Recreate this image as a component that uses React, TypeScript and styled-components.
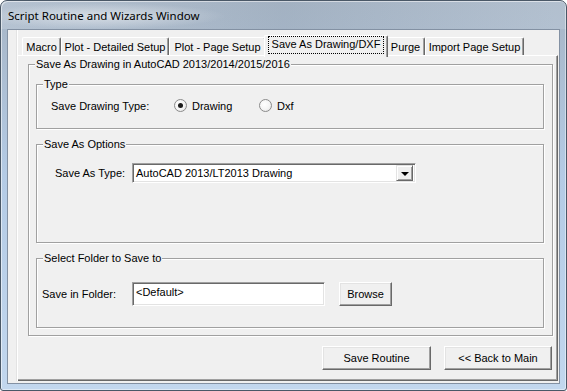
import styled, { createGlobalStyle } from "styled-components";

const GlobalStyle = createGlobalStyle`
  html, body {
    margin: 0;
    padding: 0;
    background: #ffffff;
  }
  body {
    width: 567px;
    height: 391px;
    overflow: hidden;
    font-family: "Liberation Sans", Arial, sans-serif;
  }
  * {
    box-sizing: border-box;
  }
`;

// ─── Window frame ────────────────────────────────────────────────────────────

const Window = styled.div`
  width: 567px;
  height: 391px;
  display: flex;
  flex-direction: column;
  border: 1px solid #4a5867;
  border-radius: 7px 7px 3px 3px;
  background: linear-gradient(180deg, #a8b7c8 0px, #a9b9cb 30px, #b4cbe5 45%, #c2d7ee 100%);
  box-shadow: inset 1px 1px 0 rgba(255, 255, 255, 0.55), inset -1px -1px 0 rgba(255, 255, 255, 0.45);
  overflow: hidden;
`;

const TitleBar = styled.div`
  height: 28px;
  flex: none;
  display: flex;
  align-items: center;
  padding-left: 7px;
  font-family: "Noto Sans", "Liberation Sans", sans-serif;
  font-size: 11.5px;
  color: #000;
  background:
    radial-gradient(ellipse 125px 13px at 100px 15px, rgba(255, 255, 255, 0.5), rgba(255, 255, 255, 0) 100%),
    linear-gradient(90deg, rgba(255, 255, 255, 0.15), rgba(0, 0, 0, 0.03) 50%, rgba(255, 255, 255, 0.12));
`;

const Client = styled.div`
  flex: 1;
  margin: 0 6px 6px 6px;
  border: 1px solid #8391a3;
  background: #f0f0f0;
  padding: 0 1px 2px 9px;
  display: flex;
  font-size: 11px;
  color: #000;
`;

// ─── Tab control (classic style) ─────────────────────────────────────────────

const TabControl = styled.div`
  flex: 1;
  display: flex;
  flex-direction: column;
  border-left: 1px solid #ffffff;
  box-shadow: -1px 0 0 #e3e3e3;
`;

const TabStrip = styled.div`
  height: 25px;
  display: flex;
  align-items: flex-end;
  padding-left: 4px;
  position: relative;
  z-index: 1;
`;

const Tab = styled.div<{ $w: number; $active?: boolean }>`
  width: ${(p) => (p.$active ? p.$w + 4 : p.$w)}px;
  height: ${(p) => (p.$active ? 22 : 18)}px;
  margin: ${(p) => (p.$active ? "0 -2px -2px -2px" : "0")};
  display: flex;
  align-items: center;
  justify-content: center;
  padding-bottom: ${(p) => (p.$active ? 3 : 0)}px;
  background: #f0f0f0;
  border-top: 1px solid #ffffff;
  border-left: 1px solid #ffffff;
  border-right: 1px solid #696969;
  border-radius: 2px 2px 0 0;
  box-shadow: inset -1px 0 0 #a0a0a0;
  white-space: nowrap;
  position: relative;
  z-index: ${(p) => (p.$active ? 2 : 1)};
`;

const FocusLabel = styled.span`
  outline: 1px dotted #000;
  outline-offset: 0;
  padding: 1px 3px 2px;
  line-height: 13px;
`;

const TabPage = styled.div`
  flex: 1;
  display: flex;
  flex-direction: column;
  padding: 8px 4px 0 10px;
  border-top: 1px solid #ffffff;
  border-right: 1px solid #696969;
  border-bottom: 1px solid #696969;
  box-shadow: inset -1px -1px 0 #a0a0a0;
`;

// ─── Group boxes ─────────────────────────────────────────────────────────────

const GroupBox = styled.div<{ $h: number }>`
  position: relative;
  height: ${(p) => p.$h}px;
  flex: none;
  border: 1px solid #a0a0a0;
  box-shadow: 1px 1px 0 #ffffff, inset 1px 1px 0 #ffffff;
`;

const GroupTitle = styled.span`
  position: absolute;
  top: -8px;
  left: 6px;
  padding: 0 1px;
  background: #f0f0f0;
  line-height: 14px;
  font-size: 11px;
`;

const OuterBody = styled.div`
  display: flex;
  flex-direction: column;
  gap: 15px;
  padding: 19px 8px 0 7px;
`;

const Row = styled.div<{ $pt: number; $pl: number }>`
  display: flex;
  align-items: center;
  padding: ${(p) => p.$pt}px 0 0 ${(p) => p.$pl}px;
`;

const FieldLabel = styled.span<{ $w: number }>`
  width: ${(p) => p.$w}px;
  flex: none;
  white-space: nowrap;
`;

// ─── Radio ───────────────────────────────────────────────────────────────────

const RadioItem = styled.label`
  width: 85px;
  display: flex;
  align-items: center;
  gap: 5px;
`;

const RadioDot = styled.span<{ $on?: boolean }>`
  width: 13px;
  height: 13px;
  border-radius: 50%;
  border: 1px solid #8b8b8b;
  background: radial-gradient(circle at 40% 40%, #ffffff 0%, #f4f4f4 55%, #dcdcdc 100%);
  display: flex;
  align-items: center;
  justify-content: center;

  &::after {
    content: "";
    width: 5px;
    height: 5px;
    border-radius: 50%;
    background: ${(p) => (p.$on ? "#1c1c1c" : "transparent")};
  }
`;

// ─── Inputs ──────────────────────────────────────────────────────────────────

const Sunken = styled.div<{ $w: number; $h: number }>`
  width: ${(p) => p.$w}px;
  height: ${(p) => p.$h}px;
  background: #ffffff;
  border-top: 1px solid #a0a0a0;
  border-left: 1px solid #a0a0a0;
  border-right: 1px solid #ffffff;
  border-bottom: 1px solid #ffffff;
  box-shadow: inset 1px 1px 0 #696969, inset -1px -1px 0 #e3e3e3;
`;

const ComboBox = styled(Sunken)`
  display: flex;
  align-items: center;
  padding: 0 2px 0 3px;
`;

const ComboText = styled.span`
  flex: 1;
  white-space: nowrap;
`;

const DropButton = styled.span`
  width: 17px;
  height: 16px;
  display: flex;
  align-items: center;
  justify-content: center;
  background: #f0f0f0;
  border-top: 1px solid #e3e3e3;
  border-left: 1px solid #e3e3e3;
  border-right: 1px solid #696969;
  border-bottom: 1px solid #696969;
  box-shadow: inset 1px 1px 0 #ffffff, inset -1px -1px 0 #a0a0a0;

  &::after {
    content: "";
    border-left: 4px solid transparent;
    border-right: 4px solid transparent;
    border-top: 4px solid #000;
    margin-top: 1px;
  }
`;

const TextBox = styled(Sunken)`
  padding: 3px 3px;
  line-height: 13px;
`;

const Button = styled.button<{ $w: number; $ml?: number }>`
  width: ${(p) => p.$w}px;
  height: 24px;
  margin-left: ${(p) => p.$ml ?? 0}px;
  padding: 0;
  font-family: "Liberation Sans", Arial, sans-serif;
  font-size: 11px;
  color: #000;
  background: #f0f0f0;
  border-top: 1px solid #ffffff;
  border-left: 1px solid #ffffff;
  border-right: 1px solid #696969;
  border-bottom: 1px solid #696969;
  box-shadow: inset -1px -1px 0 #a0a0a0, inset 1px 1px 0 #e3e3e3;
  flex: none;
`;

const ButtonRow = styled.div`
  display: flex;
  justify-content: flex-end;
  gap: 13px;
  margin-top: 10px;
  padding-right: 1px;
`;

// ─── Component ───────────────────────────────────────────────────────────────

const tabs = [
  { label: "Macro", w: 39 },
  { label: "Plot - Detailed Setup", w: 108 },
  { label: "Plot - Page Setup", w: 97 },
  { label: "Save As Drawing/DXF", w: 120, active: true },
  { label: "Purge", w: 39 },
  { label: "Import Page Setup", w: 99 },
];

export default function App() {
  return (
    <>
      <GlobalStyle />
      <Window>
        <TitleBar>Script Routine and Wizards Window</TitleBar>
        <Client>
          <TabControl>
            <TabStrip>
              {tabs.map((t) => (
                <Tab key={t.label} $w={t.w} $active={t.active}>
                  {t.active ? <FocusLabel>{t.label}</FocusLabel> : t.label}
                </Tab>
              ))}
            </TabStrip>
            <TabPage>
              <GroupBox $h={272}>
                <GroupTitle>Save As Drawing in AutoCAD 2013/2014/2015/2016</GroupTitle>
                <OuterBody>
                  <GroupBox $h={45}>
                    <GroupTitle>Type</GroupTitle>
                    <Row $pt={14} $pl={14}>
                      <FieldLabel $w={123}>Save Drawing Type:</FieldLabel>
                      <RadioItem>
                        <RadioDot $on />
                        Drawing
                      </RadioItem>
                      <RadioItem>
                        <RadioDot />
                        Dxf
                      </RadioItem>
                    </Row>
                  </GroupBox>

                  <GroupBox $h={99}>
                    <GroupTitle>Save As Options</GroupTitle>
                    <Row $pt={18} $pl={18}>
                      <FieldLabel $w={77}>Save As Type:</FieldLabel>
                      <ComboBox $w={284} $h={20}>
                        <ComboText>AutoCAD 2013/LT2013 Drawing</ComboText>
                        <DropButton />
                      </ComboBox>
                    </Row>
                  </GroupBox>

                  <GroupBox $h={70}>
                    <GroupTitle>Select Folder to Save to</GroupTitle>
                    <Row $pt={23} $pl={5}>
                      <FieldLabel $w={90}>Save in Folder:</FieldLabel>
                      <TextBox $w={193} $h={24}>&lt;Default&gt;</TextBox>
                      <Button $w={53} $ml={14}>
                        Browse
                      </Button>
                    </Row>
                  </GroupBox>
                </OuterBody>
              </GroupBox>

              <ButtonRow>
                <Button $w={109}>Save Routine</Button>
                <Button $w={108}>&lt;&lt; Back to Main</Button>
              </ButtonRow>
            </TabPage>
          </TabControl>
        </Client>
      </Window>
    </>
  );
}
